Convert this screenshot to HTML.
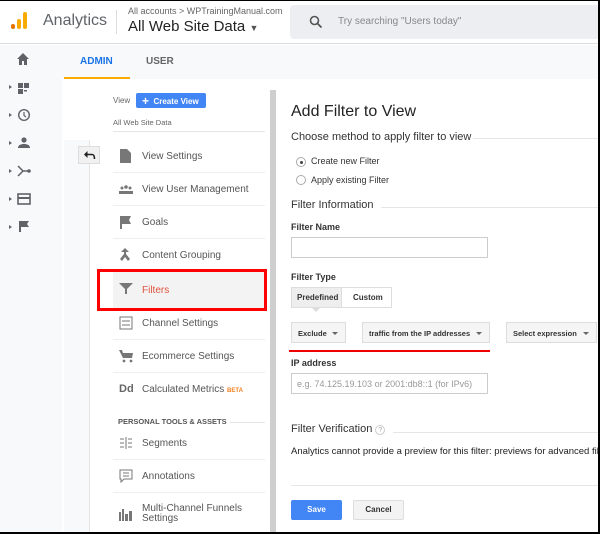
<!DOCTYPE html><html><head><style>
*{box-sizing:border-box;margin:0;padding:0}
body{width:600px;height:534px;overflow:hidden;font-family:"Liberation Sans",sans-serif;background:#fff;position:relative;color:#333}
.a{position:absolute}
.t{position:absolute;white-space:nowrap}
.item{position:absolute;left:113px;width:152px;height:33px;border-bottom:1px solid #eee;font-size:10px;color:#555}
.item span{position:absolute;left:29px;top:11px}
.item svg{position:absolute;left:6px;top:9px}
.dd{position:absolute;height:21px;background:#f5f5f5;border:1px solid #ddd;font-size:7.5px;font-weight:bold;color:#333;padding:6px 6px;overflow:hidden}
.dd:after{content:"";position:absolute;right:7px;top:9px;border:3px solid transparent;border-top-color:#666}
.hl{position:absolute;height:1px;background:#e6e6e6}
</style></head><body>
<div class="a" style="left:0;top:0;width:600px;height:44px;border-bottom:1px solid #ddd;background:#fff"></div>
<div class="a" style="left:11px;top:24px;width:4px;height:5px;background:#e37400;border-radius:2px"></div>
<div class="a" style="left:17px;top:19px;width:4px;height:10px;background:#f9ab00;border-radius:2px"></div>
<div class="a" style="left:23px;top:12px;width:4px;height:17px;background:#f9ab00;border-radius:2px"></div>
<div class="t" style="left:43px;top:12px;font-size:16px;color:#5f6368">Analytics</div>
<div class="a" style="left:116px;top:10px;width:1px;height:24px;background:#ddd"></div>
<div class="t" style="left:128px;top:6px;font-size:9px;color:#666">All accounts &gt; WPTrainingManual.com</div>
<div class="t" style="left:128px;top:18px;font-size:15px;color:#222">All Web Site Data <span style="font-size:9px;color:#555">▼</span></div>
<div class="a" style="left:290px;top:5px;width:310px;height:34px;background:#eceef1;border-radius:4px"></div>
<svg class="a" style="left:309px;top:15px" width="14" height="14"><circle cx="5.5" cy="5.5" r="4" fill="none" stroke="#555" stroke-width="1.6"/><line x1="8.5" y1="8.5" x2="12.5" y2="12.5" stroke="#555" stroke-width="1.8"/></svg>
<div class="t" style="left:338px;top:16px;font-size:10px;color:#888">Try searching "Users today"</div>
<div class="a" style="left:0;top:45px;width:62px;height:489px;background:#f8f9fa"></div>
<div class="a" style="left:62px;top:45px;width:538px;height:34px;background:#f8f9fa"></div>
<div class="t" style="left:80px;top:56px;font-size:10px;font-weight:bold;color:#1a73e8">ADMIN</div>
<div class="t" style="left:146px;top:56px;font-size:10px;font-weight:bold;color:#666">USER</div>
<div class="a" style="left:64px;top:77px;width:66px;height:2px;background:#f9ab00"></div>
<svg class="a" style="left:16px;top:52px" width="14" height="14" fill="#5f6368"><path d="M7 1L1 7h2v6h3V9h2v4h3V7h2z"/></svg>
<svg class="a" style="left:8px;top:80px" width="26" height="160" fill="#5f6368">
<path d="M1 5l3 2-3 2zM1 33l3 2-3 2zM1 61l3 2-3 2zM1 89l3 2-3 2zM1 117l3 2-3 2zM1 145l3 2-3 2z"/>
<rect x="10" y="3" width="5" height="5"/><rect x="16" y="3" width="5" height="5"/><rect x="10" y="9" width="5" height="5"/><rect x="16" y="10" width="3" height="1.5"/>
<circle cx="16" cy="35" r="5.3" fill="none" stroke="#5f6368" stroke-width="1.4"/><path d="M16 32v3.5l2 1.5" fill="none" stroke="#5f6368" stroke-width="1.2"/>
<circle cx="16" cy="60" r="2.6"/><path d="M10 68c0-3 3-4 6-4s6 1 6 4z"/>
<path d="M10 86l5 5-5 5M15 91h6" fill="none" stroke="#5f6368" stroke-width="1.5"/><circle cx="21" cy="91" r="1.8"/>
<rect x="10" y="114" width="12" height="10" fill="none" stroke="#5f6368" stroke-width="1.6"/><rect x="10" y="117" width="12" height="2"/>
<path d="M11 141h10l-2 3 2 3h-8v5h-2z"/>
</svg>
<div class="a" style="left:64px;top:79px;width:206px;height:455px;background:#fff"></div>
<div class="a" style="left:64px;top:140px;width:25px;height:394px;background:#f8f9fa"></div>
<div class="a" style="left:89px;top:140px;width:1px;height:394px;background:#e4e4e4"></div>
<div class="a" style="left:270px;top:90px;width:6px;height:444px;background:#cfcfcf"></div>
<div class="t" style="left:113px;top:96px;font-size:8px;color:#666">View</div>
<div class="a" style="left:136px;top:93px;width:70px;height:15px;background:#4285f4;border-radius:2px;color:#fff;font-size:8px;font-weight:bold;padding:3px 0 0 6px"><span style="font-size:12px;line-height:8px;position:relative;top:1px">+</span>&nbsp;&nbsp;Create View</div>
<div class="t" style="left:113px;top:118px;font-size:7.5px;color:#666">All Web Site Data</div>
<div class="a" style="left:113px;top:131px;width:152px;height:1px;background:#e6e6e6"></div>
<div class="a" style="left:78px;top:146px;width:22px;height:18px;background:#f1f1f1;border:1px solid #ddd"><svg class="a" style="left:5px;top:4px" width="12" height="9"><path d="M1 3.5h7c2 0 2.5 1.5 2.5 4.5" fill="none" stroke="#222" stroke-width="1.6"/><path d="M0 3.5l3.5-3.5v7z" fill="#222"/></svg></div>
<div class="item" style="top:140px"><svg width="12" height="14" fill="#777"><path d="M1 0h7l4 4v10H1z"/></svg><span>View Settings</span></div>
<div class="item" style="top:173px"><svg width="14" height="14" fill="#777"><circle cx="3" cy="6" r="1.5"/><circle cx="7" cy="5" r="1.8"/><circle cx="11" cy="6" r="1.5"/><rect x="0" y="9" width="14" height="3"/></svg><span>View User Management</span></div>
<div class="item" style="top:206px"><svg width="14" height="14" fill="#777"><path d="M1 1h11l-2 4 2 4H3v5H1z"/></svg><span>Goals</span></div>
<div class="item" style="top:239px"><svg width="14" height="14" fill="#777"><path d="M6 0l4 4H7v2l4 5-2 2-3-4-3 4-2-2 4-5V4H2z"/></svg><span>Content Grouping</span></div>
<div class="item" style="top:272px;background:#f3f3f3;height:37px"><svg width="14" height="14" fill="#777"><path d="M0 2h14L8 8v5H6V8z"/></svg><span style="top:13px;color:#e0533f">Filters</span></div>
<div class="item" style="top:307px"><svg width="14" height="14" fill="none" stroke="#777"><rect x="1" y="1" width="12" height="12"/><path d="M3 5h8M3 9h8"/></svg><span>Channel Settings</span></div>
<div class="item" style="top:340px"><svg width="14" height="14" fill="#777"><path d="M0 1h3l1 3h10l-1 5H4z"/><circle cx="5" cy="12" r="1.4"/><circle cx="12" cy="12" r="1.4"/></svg><span>Ecommerce Settings</span></div>
<div class="item" style="top:373px;border-bottom:none"><b style="position:absolute;left:6px;top:10px;font-size:11px;color:#666">Dd</b><span>Calculated Metrics <b style="color:#f4811f;font-size:6px">BETA</b></span></div>
<div class="t" style="left:118px;top:417px;font-size:7.5px;font-weight:bold;color:#555">PERSONAL TOOLS &amp; ASSETS</div>
<div class="a" style="left:230px;top:422px;width:35px;height:1px;background:#e6e6e6"></div>
<div class="item" style="top:427px"><svg width="14" height="14" stroke="#777" fill="none"><path d="M1 3h4M1 7h4M1 11h4M7 1v12M9 3h4M9 7h4M9 11h4"/></svg><span>Segments</span></div>
<div class="item" style="top:460px"><svg width="14" height="14" stroke="#777" fill="none"><path d="M1 1h12v9H5l-3 3v-3H1z"/><path d="M4 4h6M4 7h6"/></svg><span>Annotations</span></div>
<div class="item" style="top:493px;border:none"><svg width="14" height="14" fill="#777" style="top:14px"><rect x="0" y="5" width="2" height="9"/><rect x="3" y="2" width="2" height="12"/><rect x="6" y="7" width="3" height="7"/><rect x="10" y="4" width="3" height="10"/></svg><span style="top:11px;line-height:10px">Multi-Channel Funnels<br>Settings</span></div>
<div class="a" style="left:97px;top:269px;width:170px;height:42px;border:3px solid #f00"></div>
<div class="t" style="left:291px;top:103px;font-size:16px;color:#222">Add Filter to View</div>
<div class="t" style="left:291px;top:131px;font-size:11px;color:#333">Choose method to apply filter to view</div>
<div class="hl" style="left:473px;top:138px;width:127px"></div>
<div class="a" style="left:296px;top:157px;width:10px;height:10px;border:1px solid #aaa;border-radius:50%"><div class="a" style="left:2.5px;top:2.5px;width:3px;height:3px;background:#444;border-radius:50%"></div></div>
<div class="t" style="left:311px;top:156px;font-size:9px;color:#333">Create new Filter</div>
<div class="a" style="left:296px;top:175px;width:10px;height:10px;border:1px solid #aaa;border-radius:50%"></div>
<div class="t" style="left:311px;top:175px;font-size:9px;color:#333">Apply existing Filter</div>
<div class="t" style="left:291px;top:199px;font-size:11px;color:#333">Filter Information</div>
<div class="hl" style="left:381px;top:207px;width:219px"></div>
<div class="t" style="left:291px;top:222px;font-size:9px;font-weight:bold;color:#333">Filter Name</div>
<div class="a" style="left:291px;top:237px;width:197px;height:21px;border:1px solid #ccc"></div>
<div class="t" style="left:291px;top:272px;font-size:9px;font-weight:bold;color:#333">Filter Type</div>
<div class="a" style="left:291px;top:287px;width:101px;height:21px;border:1px solid #ddd;background:#fff"></div>
<div class="a" style="left:292px;top:288px;width:50px;height:19px;background:#eee;border-right:1px solid #ddd;font-size:8px;font-weight:bold;padding:5px 0 0 5px">Predefined</div>
<div class="t" style="left:353px;top:293px;font-size:8px;font-weight:bold">Custom</div>
<div class="a" style="left:312px;top:308px;border:4px solid transparent;border-top-color:#ddd"></div>
<div class="dd" style="left:291px;top:322px;width:55px">Exclude</div>
<div class="dd" style="left:362px;top:322px;width:128px">traffic from the IP addresses</div>
<div class="dd" style="left:506px;top:322px;width:91px">Select expression</div>
<div class="a" style="left:289px;top:350px;width:201px;height:2px;background:#e00"></div>
<div class="t" style="left:291px;top:358px;font-size:9px;font-weight:bold">IP address</div>
<div class="a" style="left:291px;top:373px;width:197px;height:21px;border:1px solid #ccc;font-size:9px;color:#999;padding:5px 0 0 5px;white-space:nowrap">e.g. 74.125.19.103 or 2001:db8::1 (for IPv6)</div>
<div class="t" style="left:291px;top:423px;font-size:11px;color:#333">Filter Verification <span style="display:inline-block;width:10px;height:10px;border:1px solid #ccc;border-radius:50%;font-size:7px;color:#aaa;text-align:center;line-height:9px">?</span></div>
<div class="hl" style="left:393px;top:432px;width:207px"></div>
<div class="t" style="left:291px;top:446px;font-size:9.5px;color:#222">Analytics cannot provide a preview for this filter: previews for advanced filte</div>
<div class="hl" style="left:291px;top:485px;width:309px"></div>
<div class="a" style="left:291px;top:500px;width:51px;height:20px;background:#4285f4;border-radius:2px;color:#fff;font-size:8px;font-weight:bold;text-align:center;line-height:20px">Save</div>
<div class="a" style="left:353px;top:500px;width:51px;height:20px;background:#f3f3f3;border:1px solid #ddd;border-radius:2px;color:#333;font-size:8px;font-weight:bold;text-align:center;line-height:18px">Cancel</div>
<div class="a" style="left:0;top:0;width:600px;height:1px;background:#000"></div>
<div class="a" style="left:598px;top:0;width:2px;height:534px;background:#000"></div>
<div class="a" style="left:0;top:532px;width:600px;height:2px;background:#000"></div>
</body></html>
